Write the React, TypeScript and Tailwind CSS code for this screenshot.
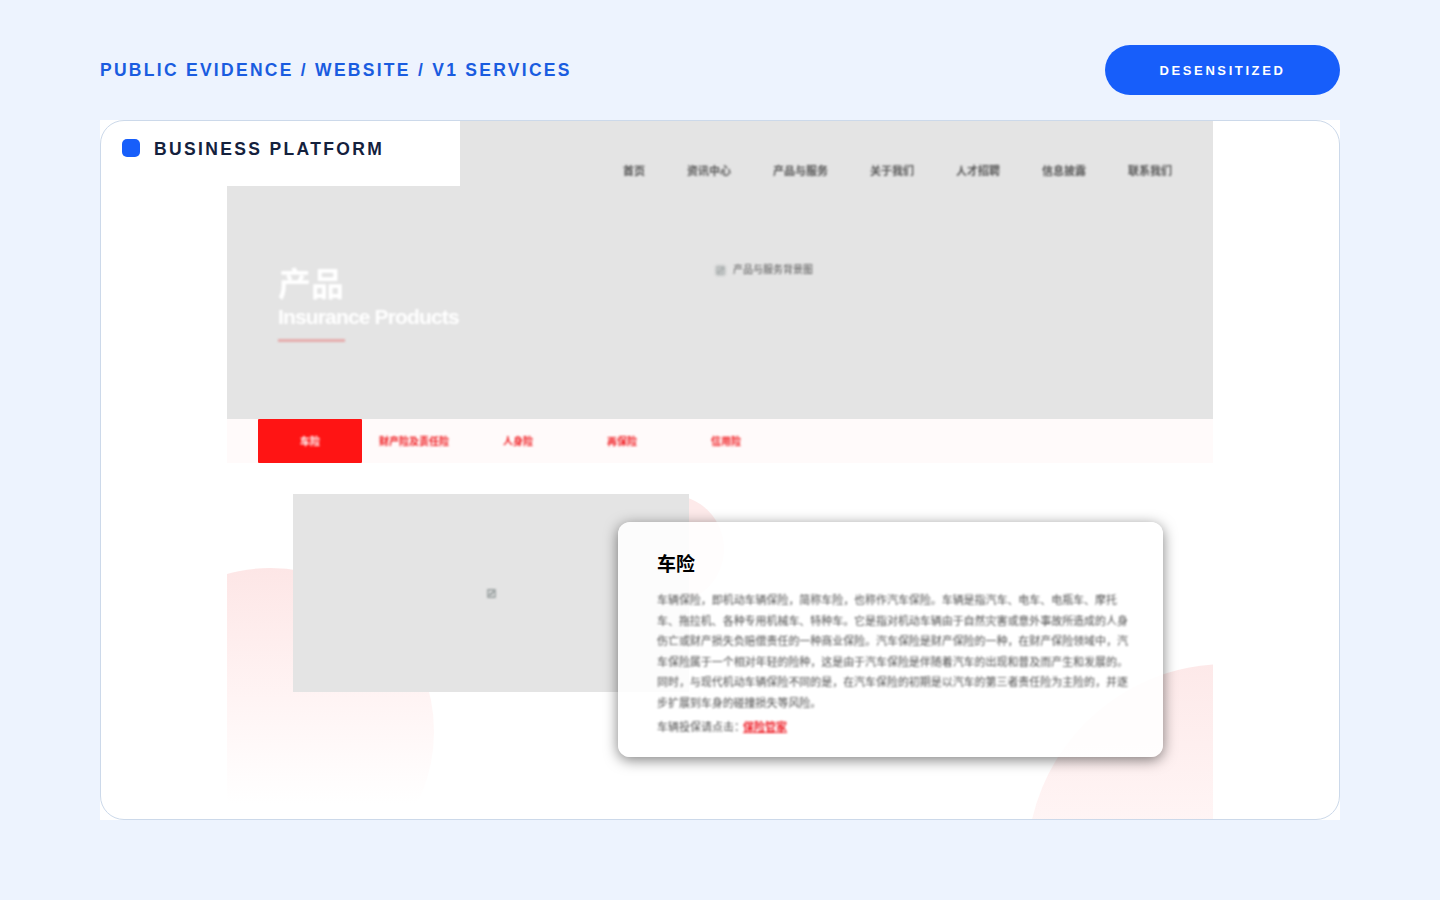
import React from 'react';

const navItems = ['首页', '资讯中心', '产品与服务', '关于我们', '人才招聘', '信息披露', '联系我们'];
const tabs = ['车险', '财产险及责任险', '人身险', '再保险', '信用险'];
const bodyLines = [
  '车辆保险，即机动车辆保险，简称车险，也称作汽车保险。车辆是指汽车、电车、电瓶车、摩托',
  '车、拖拉机、各种专用机械车、特种车。它是指对机动车辆由于自然灾害或意外事故所造成的人身',
  '伤亡或财产损失负赔偿责任的一种商业保险。汽车保险是财产保险的一种，在财产保险领域中，汽',
  '车保险属于一个相对年轻的险种，这是由于汽车保险是伴随着汽车的出现和普及而产生和发展的。',
  '同时，与现代机动车辆保险不同的是，在汽车保险的初期是以汽车的第三者责任险为主险的，并逐',
  '步扩展到车身的碰撞损失等风险。',
];

const cjk = "font-['Liberation_Sans','Noto_Sans_CJK_SC',sans-serif]";

// broken image glyph left by the browser
const BrokenImage: React.FC = () => (
  <svg viewBox="0 0 10 10" className="w-[9px] h-[9px] shrink-0 blur-[0.8px]" fill="none" stroke="#7f8888" strokeWidth="1.2">
    <path d="M1 1h8v8H1z" />
    <path d="M2 7l2-2 1 1 2-3 1 1" />
  </svg>
);

export default function App() {
  return (
    <div className="w-[1440px] h-[900px] overflow-hidden bg-[#edf3fe] font-['Liberation_Sans',sans-serif] flex flex-col px-[100px]">
      {/* Top row */}
      <header className="h-[120px] flex items-start justify-between">
        <h1 className="mt-[60px] text-[17.5px] leading-[21px] font-bold tracking-[2.28px] text-[#1a5ce0] whitespace-nowrap">
          PUBLIC EVIDENCE / WEBSITE / V1 SERVICES
        </h1>
        <div className="mt-[45px] w-[235px] h-[50px] pt-px rounded-full bg-[#175efa] flex items-center justify-center text-[13px] font-bold tracking-[2.6px] text-white">
          DESENSITIZED
        </div>
      </header>

      {/* Card */}
      <section className="relative h-[700px] bg-white">
        <div className="relative h-full pl-[127px] pt-px overflow-hidden">
          <div className="relative w-[986px] h-full overflow-hidden">
            {/* Hero */}
            <div className={`h-[298px] bg-[#e4e4e4] flex flex-col ${cjk}`}>
              <nav className="flex justify-end gap-[42px] pr-[41px] pt-[43px] text-[11px] leading-[15px] font-bold text-[#555] blur-[0.8px] whitespace-nowrap">
                {navItems.map((item) => (
                  <span key={item}>{item}</span>
                ))}
              </nav>
              <div className="flex items-start pl-[51px] pt-[81px]">
                <div className="w-[438px] shrink-0 mt-[5px] text-white">
                  <div className="text-[33px] leading-[40px] font-bold blur-[0.8px]">产品</div>
                  <div className="text-[21px] leading-[26px] font-bold tracking-[-0.85px] whitespace-nowrap -mt-px blur-[0.8px]">Insurance Products</div>
                  <div className="w-[67px] h-[3px] mt-[9px] bg-[#e5acac] blur-[0.8px]" />
                </div>
                <div className="flex items-center gap-[8px] mt-[3px] text-[10px] leading-[14px] text-[#555] blur-[0.8px] whitespace-nowrap">
                  <BrokenImage />
                  <span>产品与服务背景图</span>
                </div>
              </div>
            </div>

            {/* Tabs */}
            <div className={`h-[44px] bg-[#fffafa] flex pl-[31px] text-[10px] font-bold text-[#f01a1f] ${cjk}`}>
              {tabs.map((tab, i) => (
                <div
                  key={tab}
                  className={i === 0
                    ? 'w-[104px] flex items-center justify-center bg-[#ff1414] text-white rounded-[1px]'
                    : 'w-[104px] flex items-center justify-center whitespace-nowrap'}
                >
                  <span className="blur-[0.8px]">{tab}</span>
                </div>
              ))}
            </div>

            {/* Decorative circles */}
            <div className="absolute left-[-120px] top-[447px] w-[327px] h-[327px] rounded-full bg-[linear-gradient(180deg,#fde6e6_0%,#fff4f4_40%,#ffffff_72%)]" />
            <div className="absolute left-[389px] top-[374px] w-[108px] h-[108px] rounded-full bg-[#fdeaea]" />
            <div className="absolute left-[800px] top-[543px] w-[400px] h-[400px] rounded-full bg-[linear-gradient(180deg,#fde9e9_0%,#fff5f5_40%)]" />

            {/* Content */}
            <div className="relative pl-[66px] pt-[31px]">
              <div className="w-[396px] h-[198px] bg-[#e4e4e4] flex items-center justify-center">
                <BrokenImage />
              </div>
              <article className={`absolute left-[391px] top-[59px] w-[545px] h-[235px] rounded-[12px] bg-white/90 shadow-[0_3px_14px_rgba(0,0,0,0.5)] pl-[39px] pt-[30px] ${cjk}`}>
                <h2 className="text-[19px] leading-[24px] font-bold text-black translate-y-px">车险</h2>
                <div className="mt-[14px] text-[11px] leading-[20.5px] tracking-[-0.05px] text-[#4f4f4f] blur-[0.8px] whitespace-nowrap">
                  {bodyLines.map((line) => (
                    <div key={line}>{line}</div>
                  ))}
                </div>
                <div className="mt-[4px] text-[11px] leading-[20px] text-[#4f4f4f] blur-[0.8px]">
                  车辆投保请点击：<span className="-ml-[2px] font-bold text-[#ee1c25] underline">保险管家</span>
                </div>
              </article>
            </div>
          </div>
        </div>

        {/* Title patch over the page shot */}
        <div className="absolute left-0 top-0 w-[360px] h-[66px] bg-white flex items-start pl-[22px] pt-[19px] gap-[14px]">
          <span className="w-[18px] h-[18px] rounded-[5px] bg-[#175efa]" />
          <span className="text-[17.5px] leading-[21px] font-bold tracking-[2.35px] text-[#14213d] whitespace-nowrap">BUSINESS PLATFORM</span>
        </div>

        {/* Card outline */}
        <div className="absolute inset-0 rounded-[24px] border border-[#ccd9ea] pointer-events-none" />
      </section>
    </div>
  );
}
